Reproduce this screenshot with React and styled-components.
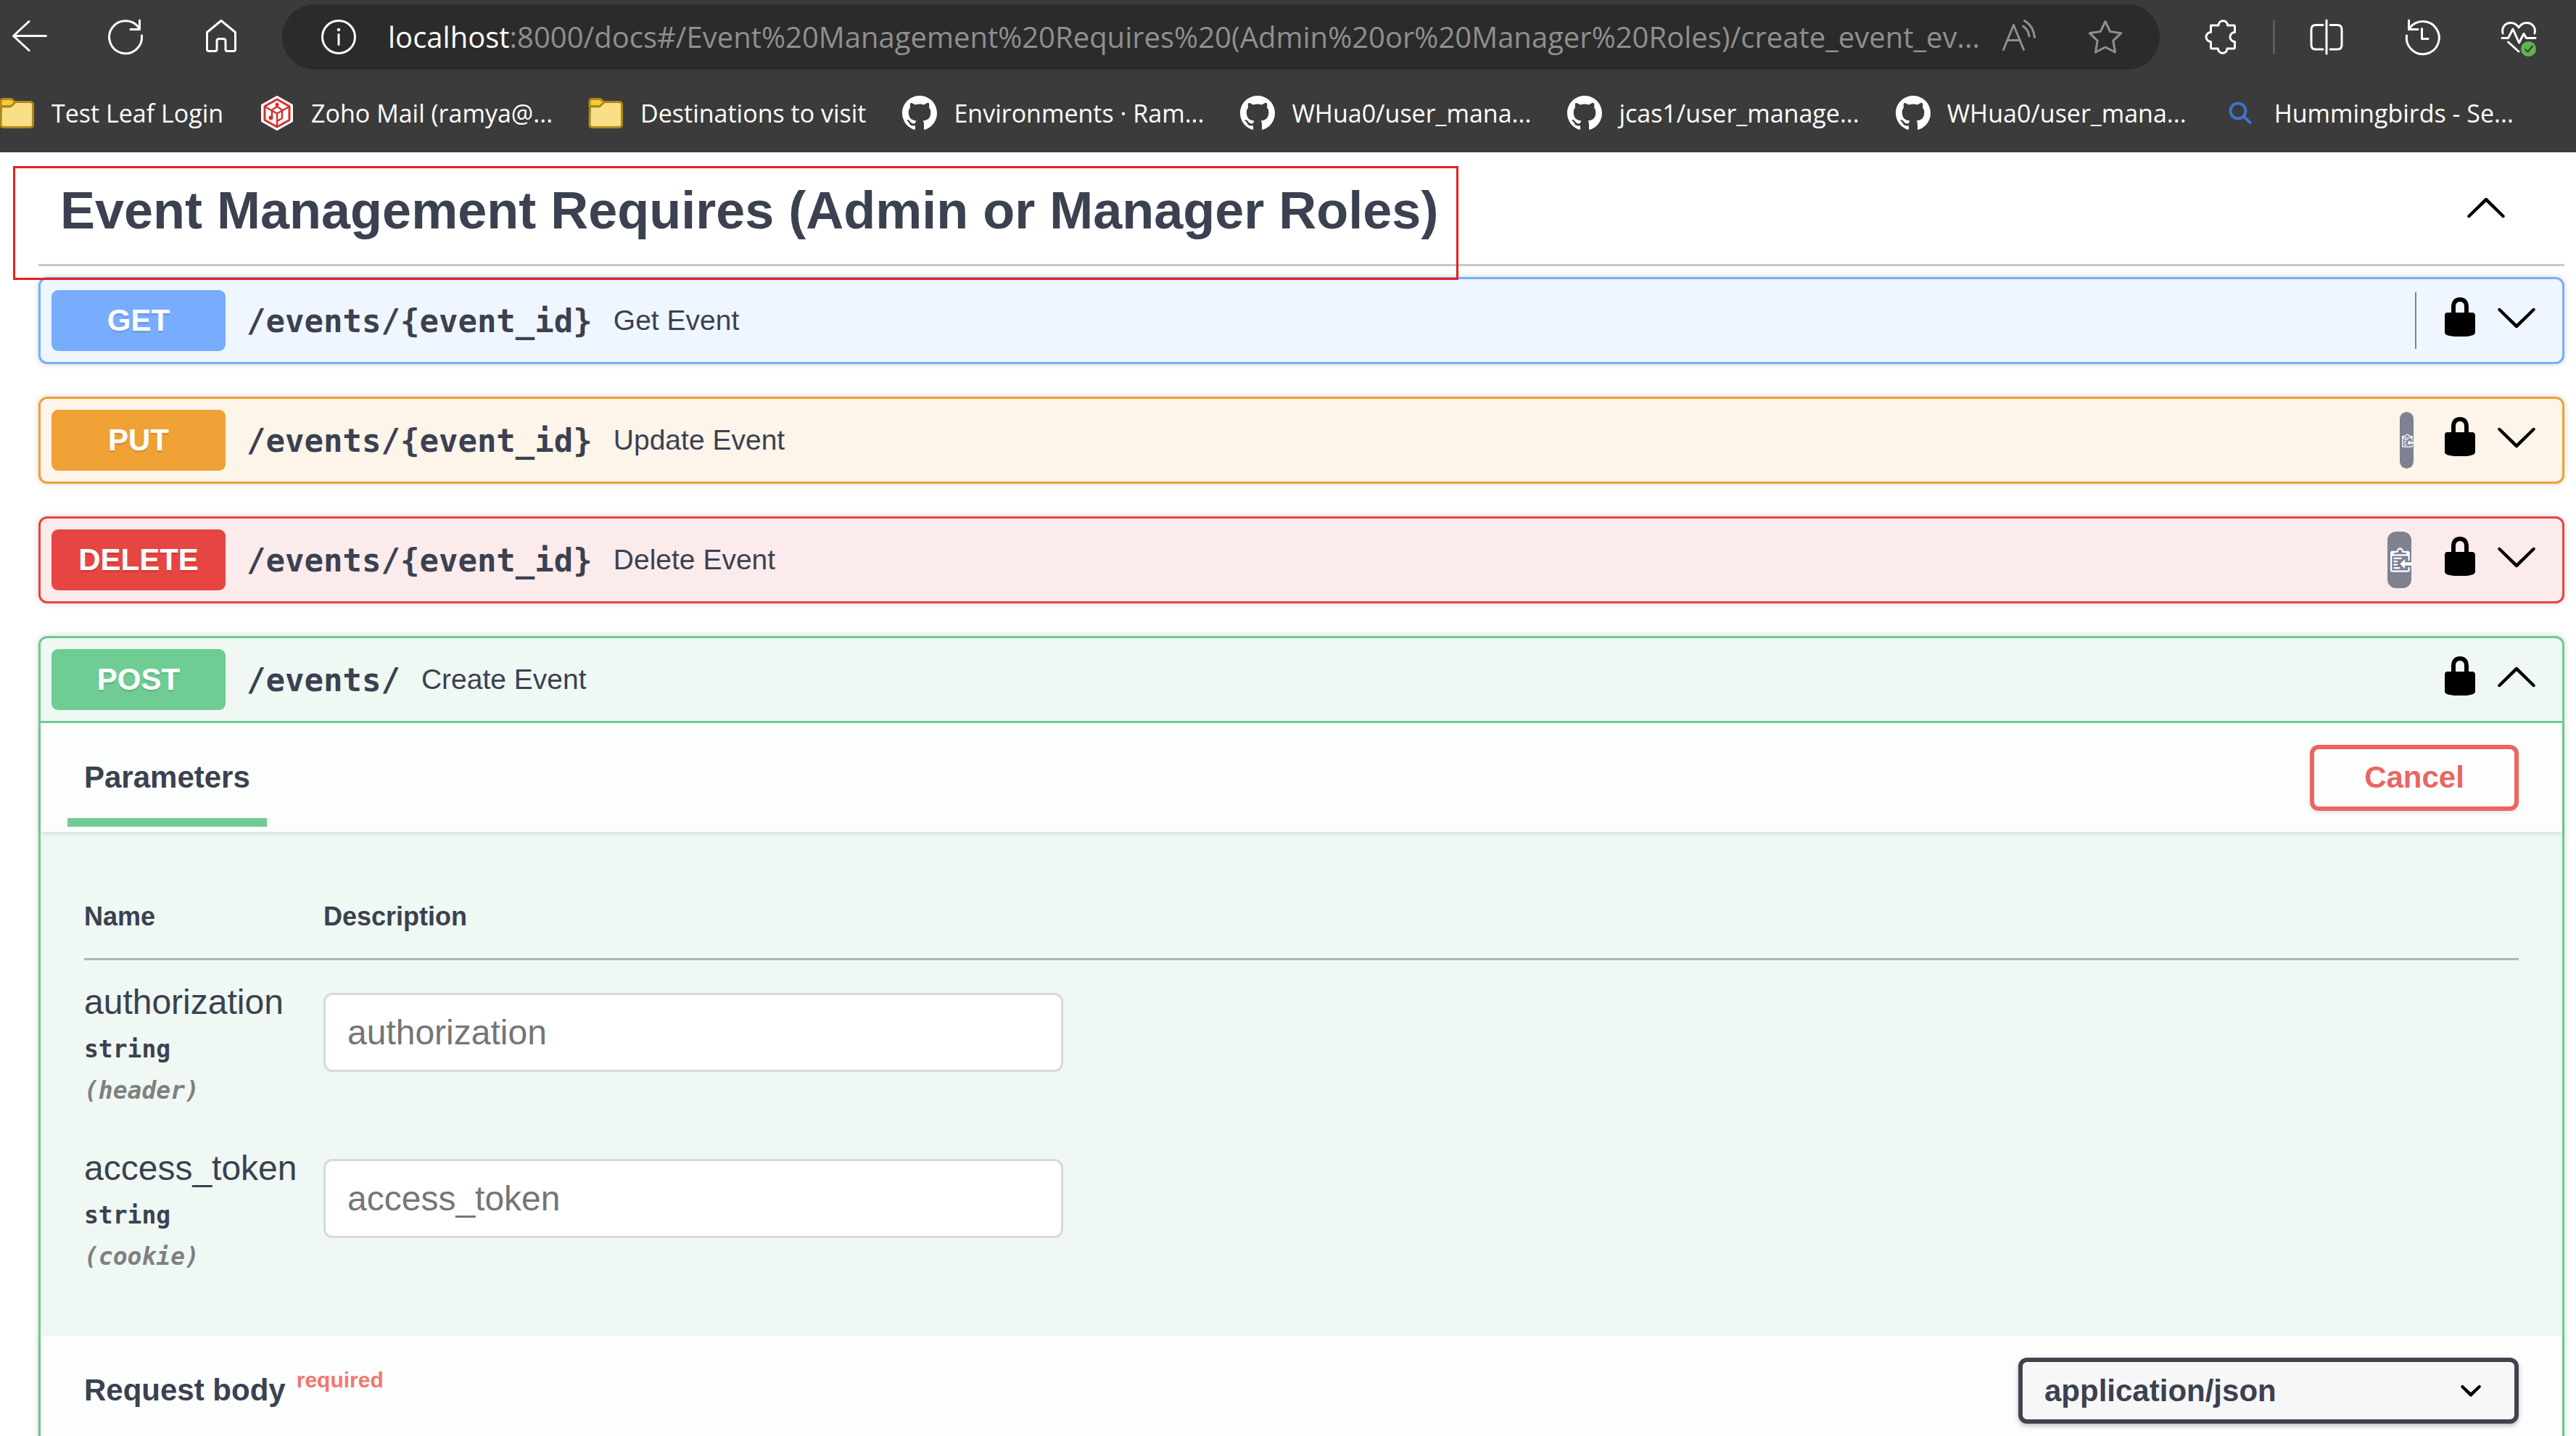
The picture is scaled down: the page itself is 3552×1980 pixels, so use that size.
import React from "react";
import styled, { createGlobalStyle } from "styled-components";

const SANS = `"Liberation Sans", Arial, sans-serif`;
const MONO = `"DejaVu Sans Mono", monospace`;
const CHROME = `"Open Sans", "Noto Sans", sans-serif`;
const INK = "#3b4151";

const GlobalStyle = createGlobalStyle`
  *, *::before, *::after { box-sizing: border-box; }
  body { margin: 0; background: #fff; font-family: ${SANS}; color: ${INK}; }
  button, input, select { font: inherit; color: inherit; margin: 0; }
  button { background: none; border: 0; padding: 0; cursor: pointer; }
  h2, h3 { margin: 0; }
  svg { display: block; flex: none; overflow: visible; }
`;

const Screen = styled.div`
  height: 100vh;
  overflow: hidden;
`;

/* ---------- browser chrome ---------- */

const Chrome = styled.header`
  background: #3b3b3b;
  color: #fff;
  font-family: ${CHROME};
`;

const Toolbar = styled.div`
  display: flex;
  align-items: center;
  height: 102px;
  padding: 0 55px 0 17px;
`;

const IconGroup = styled.div`
  display: flex;
  gap: 84px;
`;

const IconButton = styled.button`
  color: ${(p) => p.$color || "#fff"};
`;

const AddressBar = styled.div`
  flex: 1;
  min-width: 0;
  display: flex;
  align-items: center;
  height: 90px;
  margin: 0 60px;
  padding: 0 51px 0 54px;
  border-radius: 45px;
  background: #2b2b2b;
`;

const Url = styled.div`
  flex: 1;
  min-width: 0;
  margin-left: 44px;
  overflow: hidden;
  white-space: nowrap;
  font-size: 40px;
  line-height: 60px;
  color: #8f8f8f;
`;

const UrlHost = styled.span`
  color: #fff;
`;

const AddressActions = styled.div`
  display: flex;
  gap: 71px;
`;

const ToolbarDivider = styled.div`
  width: 3px;
  height: 48px;
  margin: 0 48px;
  background: #5c5c5c;
`;

const Bookmarks = styled.nav`
  display: flex;
  align-items: center;
  gap: 50px;
  height: 108px;
  overflow: hidden;
`;

const Bookmark = styled.a`
  display: flex;
  align-items: center;
  flex: none;
  gap: 23px;
  color: #fff;
  font-size: 34px;
  line-height: 48px;
  text-decoration: none;
  white-space: nowrap;
`;

const line = {
  fill: "none",
  stroke: "currentColor",
  strokeWidth: 3,
  strokeLinecap: "round",
  strokeLinejoin: "round",
};

const Icon48 = ({ children }) => (
  <svg width="48" height="48" viewBox="0 0 48 48" aria-hidden="true" {...line}>
    {children}
  </svg>
);

const BackIcon = () => (
  <Icon48><path d="M46.5 22.5H1.5M23 2.5L1.5 22.5L23 42.5" /></Icon48>
);
const ReloadIcon = () => (
  <Icon48><path d="M46.5 22A22.5 22.5 0 1 1 42.5 11.2M43.5 1V13.5H31" /></Icon48>
);
const HomeIcon = () => (
  <Icon48>
    <path d="M24 1.5L43.5 17.5V41q0 2.5-2.5 2.5H32.5q-2.5 0-2.5-2.5V29.5q0-3-3-3h-6q-3 0-3 3V41q0 2.5-2.5 2.5H7q-2.5 0-2.5-2.5V17.5Z" />
  </Icon48>
);
const InfoIcon = () => (
  <Icon48>
    <circle cx="24" cy="24" r="22.5" />
    <circle cx="24" cy="14" r="2.3" fill="currentColor" stroke="none" />
    <path d="M24 20.5V34.5" />
  </Icon48>
);
const ReadAloudIcon = () => (
  <Icon48>
    <path d="M2.5 41.5L16.5 7.5L30.5 41.5M7.5 28.5H25.5M29.5 9Q37 14 38 23M31.5 1.5Q44 9 45.5 24.5" />
  </Icon48>
);
const StarIcon = () => (
  <Icon48>
    <path d="M24 2.5L30.6 16.5L45.7 18.7L34.9 29.2L37.5 45L24 38L10.5 45L13.1 29.2L2.3 18.7L17.4 16.5Z" />
  </Icon48>
);
const PuzzleIcon = () => (
  <Icon48>
    <path d="M10.5 8H21a6.3 6.3 0 0 1 12.6 0H42q1.5 0 1.5 1.5V17.5a6.5 6.5 0 0 0 0 13V38.5q0 1.5-1.5 1.5H33a6.3 6.3 0 0 1-12.6 0H12q-1.5 0-1.5-1.5V30.5a6.5 6.5 0 0 1 0-13Z" />
  </Icon48>
);
const SplitIcon = () => (
  <Icon48>
    <path d="M18 7.5H8q-6 0-6 6V35q0 6 6 6H18M28 7.5H38q6 0 6 6V35q0 6-6 6H28M23 1V47" />
  </Icon48>
);
const HistoryIcon = () => (
  <Icon48><path d="M1.5 22A22.5 22.5 0 1 0 5.5 12M4.5 1V13.5H17M22.5 12.5V26.5H31" /></Icon48>
);
const HealthIcon = () => (
  <Icon48>
    <path d="M2 19C0 10 6 4.5 13 4.5C18 4.5 21.5 7 24 11C26.5 7 30 4.5 35 4.5C42 4.5 48 10 46 19M1 25.5H9.5L16 13L24.5 32L31 19.5L34.5 25.5H47M9.5 31L24 44" />
    <circle cx="37.5" cy="40.5" r="10.5" fill="#62b152" stroke="none" />
    <path d="M33 41L36.5 44.5L43 36.5" stroke="#33402f" strokeWidth="2" />
  </Icon48>
);
const FolderIcon = () => (
  <svg width="48" height="48" viewBox="0 0 48 48" aria-hidden="true" stroke="#b0861a" strokeWidth="3" strokeLinejoin="round">
    <path d="M1.5 15H14L21 8.5H41.5q4 0 4 4V39.5q0 4-4 4H5q-4 0-4-4Z" fill="#f9df86" />
    <path d="M1 14.5V8q0-3.5 3.5-3.5H16L21 9L15 14.5Z" fill="#f1cd3e" />
  </svg>
);
const CubeIcon = () => (
  <svg width="48" height="48" viewBox="0 0 48 48" aria-hidden="true" fill="none" stroke="#d4302e" strokeWidth="3" strokeLinejoin="round">
    <path d="M24 1.5L44.5 13V35L24 46.5L3.5 35V13Z" fill="#fff" stroke="#fff" />
    <path d="M24 5L41 14.5V33.5L24 43L7 33.5V14.5Z" />
    <path d="M8 15.5L24 24.5L40 15.5M24 24.5V41M24 9.5V15L17 19.5M24 15L31 19.5M17 20V30M13.5 31L18 31M31 20V31L25 34.5" strokeWidth="2.5" />
    <circle cx="24" cy="12.5" r="2.5" fill="#d4302e" stroke="none" />
    <circle cx="15.5" cy="30.5" r="3" fill="#d4302e" stroke="none" />
  </svg>
);
const GithubIcon = () => (
  <svg width="48" height="48" viewBox="0 0 16 16" aria-hidden="true" fill="#fff">
    <path d="M8 0C3.58 0 0 3.58 0 8c0 3.54 2.29 6.53 5.47 7.59.4.07.55-.17.55-.38 0-.19-.01-.82-.01-1.49-2.01.37-2.53-.49-2.69-.94-.09-.23-.48-.94-.82-1.13-.28-.15-.68-.52-.01-.53.63-.01 1.08.58 1.23.82.72 1.21 1.87.87 2.33.66.07-.52.28-.87.51-1.07-1.78-.2-3.64-.89-3.64-3.95 0-.87.31-1.59.82-2.15-.08-.2-.36-1.02.08-2.12 0 0 .67-.21 2.2.82.64-.18 1.32-.27 2-.27.68 0 1.36.09 2 .27 1.53-1.04 2.2-.82 2.2-.82.44 1.1.16 1.92.08 2.12.51.56.82 1.27.82 2.15 0 3.07-1.87 3.75-3.65 3.95.29.25.54.73.54 1.48 0 1.07-.01 1.93-.01 2.2 0 .21.15.46.55.38A8.013 8.013 0 0016 8c0-4.42-3.58-8-8-8z" />
  </svg>
);
const SearchIcon = () => (
  <svg width="48" height="48" viewBox="0 0 48 48" aria-hidden="true" fill="none" stroke="#3a76c8" strokeWidth="4" strokeLinecap="round">
    <circle cx="21" cy="21" r="10.5" />
    <path d="M28.5 28.5L37.5 37" />
  </svg>
);

const BOOKMARKS = [
  { icon: FolderIcon, label: "Test Leaf Login" },
  { icon: CubeIcon, label: "Zoho Mail (ramya@..." },
  { icon: FolderIcon, label: "Destinations to visit" },
  { icon: GithubIcon, label: "Environments · Ram..." },
  { icon: GithubIcon, label: "WHua0/user_mana..." },
  { icon: GithubIcon, label: "jcas1/user_manage..." },
  { icon: GithubIcon, label: "WHua0/user_mana..." },
  { icon: SearchIcon, label: "Hummingbirds - Se..." },
];

function BrowserChrome() {
  return (
    <Chrome>
      <Toolbar>
        <IconGroup>
          <IconButton aria-label="Back"><BackIcon /></IconButton>
          <IconButton aria-label="Refresh"><ReloadIcon /></IconButton>
          <IconButton aria-label="Home"><HomeIcon /></IconButton>
        </IconGroup>
        <AddressBar>
          <IconButton aria-label="View site information"><InfoIcon /></IconButton>
          <Url>
            <UrlHost>localhost</UrlHost>
            :8000/docs#/Event%20Management%20Requires%20(Admin%20or%20Manager%20Roles)/create_event_ev...
          </Url>
          <AddressActions>
            <IconButton aria-label="Read aloud" $color="#8f8f8f"><ReadAloudIcon /></IconButton>
            <IconButton aria-label="Add to favorites" $color="#8f8f8f"><StarIcon /></IconButton>
          </AddressActions>
        </AddressBar>
        <IconButton aria-label="Extensions"><PuzzleIcon /></IconButton>
        <ToolbarDivider />
        <IconGroup>
          <IconButton aria-label="Split screen"><SplitIcon /></IconButton>
          <IconButton aria-label="History"><HistoryIcon /></IconButton>
          <IconButton aria-label="Browser essentials"><HealthIcon /></IconButton>
        </IconGroup>
      </Toolbar>
      <Bookmarks>
        {BOOKMARKS.map(({ icon: BookmarkIcon, label }, i) => (
          <Bookmark key={i} href="#">
            <BookmarkIcon />
            {label}
          </Bookmark>
        ))}
      </Bookmarks>
    </Chrome>
  );
}

/* ---------- API docs ---------- */

const Docs = styled.main`
  position: relative;
  padding: 0 16px 0 53px;
`;

const Annotation = styled.div`
  position: absolute;
  top: 19px;
  left: 18px;
  width: 1993px;
  height: 157px;
  border: 3px solid #eb1f1f;
  pointer-events: none;
`;

const TagHeader = styled.div`
  display: flex;
  align-items: center;
  justify-content: space-between;
  padding: 38px 78px 32px 30px;
  border-bottom: 3px solid #c5c6cb;
`;

const TagTitle = styled.h2`
  font-size: 72px;
  line-height: 84px;
  font-weight: 700;
  white-space: nowrap;
`;

const ToggleButton = styled.button`
  color: #000;
`;

const Operations = styled.div`
  display: grid;
  gap: 45px;
  padding-top: 15px;
`;

const METHOD = {
  GET: { color: "#78adfe", tint: "#f0f6ff" },
  PUT: { color: "#efa136", tint: "#fdf4ea" },
  DELETE: { color: "#e74541", tint: "#fcebeb" },
  POST: { color: "#6fcc93", tint: "#eff8f3" },
};

const Block = styled.section`
  border: 3px solid ${(p) => METHOD[p.$method].color};
  border-radius: 12px;
  background: ${(p) => METHOD[p.$method].tint};
  box-shadow: 0 0 9px rgba(0, 0, 0, 0.19);
`;

const Summary = styled.div`
  display: flex;
  align-items: center;
  padding: 15px 33px 15px 15px;
`;

const SummaryControl = styled.button`
  flex: 1;
  display: flex;
  align-items: center;
  gap: 29px;
  text-align: left;
`;

const MethodBadge = styled.span`
  width: 240px;
  padding: 18px 0;
  border-radius: 9px;
  background: ${(p) => METHOD[p.$method].color};
  color: #fff;
  font-size: 42px;
  line-height: 48px;
  font-weight: 700;
  text-align: center;
  text-shadow: 0 3px 0 rgba(0, 0, 0, 0.1);
`;

const Path = styled.span`
  font-family: ${MONO};
  font-size: 44px;
  font-weight: 700;
`;

const SummaryText = styled.span`
  font-size: 39px;
`;

const CopyChip = styled.button`
  display: flex;
  align-items: center;
  justify-content: flex-end;
  width: ${(p) => p.$width}px;
  height: 78px;
  margin-right: ${(p) => p.$gap}px;
  border-radius: ${(p) => (p.$width < 3 ? 0 : 12)}px;
  background: #7d8293;
  overflow: hidden;
`;

const HeaderActions = styled.div`
  display: flex;
  gap: 18px;
  padding-bottom: 10px;
`;

const Glyph = ({ d }) => (
  <svg width="60" height="60" viewBox="0 0 20 20" aria-hidden="true" fill="#000">
    <path d={d} />
  </svg>
);

const ARROW_UP =
  "M17.418 14.908C17.69 15.176 18.127 15.176 18.397 14.908C18.667 14.64 18.668 14.207 18.397 13.939L10.489 6.109C10.219 5.841 9.782 5.841 9.51 6.109L1.602 13.939C1.332 14.207 1.332 14.64 1.602 14.908C1.873 15.176 2.311 15.176 2.581 14.908L10 7.767L17.418 14.908Z";
const ARROW_DOWN =
  "M17.418 6.109c.272-.268.709-.268.979 0s.271.701 0 .969l-7.908 7.83c-.27.268-.707.268-.979 0l-7.908-7.83c-.27-.268-.27-.701 0-.969.271-.268.709-.268.979 0L10 13.25l7.418-7.141z";
const SELECT_ARROW =
  "M13.418 7.859a.695.695 0 01.978 0 .68.68 0 010 .969l-3.908 3.83a.697.697 0 01-.979 0l-3.908-3.83a.68.68 0 010-.969.695.695 0 01.978 0L10 11l3.418-3.141z";
const LOCK =
  "M15.8 8H14V5.6C14 2.703 12.665 1 10 1 7.334 1 6 2.703 6 5.6V8H4c-.553 0-1 .646-1 1.199V17c0 .549.428 1.139.951 1.307l1.197.387C5.672 18.861 6.55 19 7.1 19h5.8c.549 0 1.428-.139 1.951-.307l1.196-.387c.524-.167.953-.757.953-1.306V9.199C17 8.646 16.352 8 15.8 8zM12 8H8V5.199C8 3.754 8.797 3 10 3c1.203 0 2 .754 2 2.199V8z";

const ClipboardGlyph = ({ height }) => (
  <svg width={Math.round((height * 13) / 15)} height={height} viewBox="0 1 13 15" aria-hidden="true" fill="#fff">
    <path
      fillRule="evenodd"
      d="M2 13h4v1H2v-1zm5-6H2v1h5V7zm2 3V8l-3 3 3 3v-2h5v-2H9zM4.5 9H2v1h2.5V9zM2 12h2.5v-1H2v1zm9 1h1v2c-.02.28-.11.52-.3.7-.19.18-.42.28-.7.3H1c-.55 0-1-.45-1-1V4c0-.55.45-1 1-1h3c0-1.11.89-2 2-2 1.11 0 2 .89 2 2h3c.55 0 1 .45 1 1v5h-1V6H1v9h10v-2zM2 5h8c0-.55-.45-1-1-1H8c-.55 0-1-.45-1-1s-.45-1-1-1-1 .45-1 1-.45 1-1 1H3c-.55 0-1 .45-1 1z"
    />
  </svg>
);

function Operation({ method, path, summary, copy, open, children }) {
  return (
    <Block $method={method}>
      <Summary>
        <SummaryControl aria-expanded={Boolean(open)}>
          <MethodBadge $method={method}>{method}</MethodBadge>
          <Path>{path}</Path>
          <SummaryText>{summary}</SummaryText>
        </SummaryControl>
        {copy && (
          <CopyChip $width={copy.width} $gap={copy.gap} aria-label="Copy to clipboard">
            {copy.icon && <ClipboardGlyph height={copy.icon} />}
          </CopyChip>
        )}
        <HeaderActions>
          <ToggleButton aria-label="Authorization"><Glyph d={LOCK} /></ToggleButton>
          <ToggleButton aria-label={open ? "Collapse operation" : "Expand operation"}>
            <Glyph d={open ? ARROW_UP : ARROW_DOWN} />
          </ToggleButton>
        </HeaderActions>
      </Summary>
      {children}
    </Block>
  );
}

const Body = styled.div`
  border-top: 3px solid ${METHOD.POST.color};
`;

const SectionHeader = styled.div`
  display: flex;
  align-items: center;
  justify-content: space-between;
  height: 150px;
  padding: 0 60px;
  background: #fcfefd;
  box-shadow: 0 3px 6px rgba(0, 0, 0, 0.1);
`;

const SectionTitle = styled.h3`
  display: flex;
  align-items: center;
  gap: 15px;
  font-size: 42px;
  line-height: 48px;
  font-weight: 700;
`;

const ActiveTab = styled(SectionTitle)`
  position: relative;
  height: 100%;

  &::after {
    content: "";
    position: absolute;
    left: -10%;
    right: -10%;
    bottom: 7px;
    height: 12px;
    background: ${METHOD.POST.color};
  }
`;

const Required = styled.sup`
  align-self: flex-start;
  font-size: 30px;
  line-height: 20px;
  color: #f37770;
`;

const CancelButton = styled.button`
  width: 288px;
  height: 91px;
  border: 6px solid #ec6561;
  border-radius: 12px;
  color: #ec6561;
  font-size: 42px;
  font-weight: 700;
  box-shadow: 0 3px 6px rgba(0, 0, 0, 0.1);
`;

const Parameters = styled.div`
  padding: 60px;
`;

const ParamTable = styled.table`
  width: 100%;
  border-collapse: separate;
  border-spacing: 0;
  table-layout: fixed;
`;

const HeadCell = styled.th`
  width: ${(p) => (p.$narrow ? "330px" : "auto")};
  padding: 36px 0;
  border-bottom: 3px solid #afb7b7;
  font-size: 36px;
  line-height: 42px;
  text-align: left;
`;

const NameCell = styled.td`
  padding: 31px 0 21px;
  vertical-align: top;
`;

const InputCell = styled.td`
  padding: 45px 0 0;
  vertical-align: top;
`;

const ParamName = styled.label`
  display: block;
  margin-bottom: 9px;
  font-size: 48px;
  line-height: 54px;
`;

const ParamMeta = styled.div`
  font-family: ${MONO};
  font-size: 33px;
  line-height: 57px;
  font-weight: 700;
  font-style: ${(p) => (p.$location ? "italic" : "normal")};
  color: ${(p) => (p.$location ? "#808080" : INK)};
`;

const ParamInput = styled.input`
  display: block;
  width: 1020px;
  max-width: 100%;
  height: 109px;
  padding: 0 30px;
  border: 3px solid #d9d9d9;
  border-radius: 12px;
  background: #fff;
  font-size: 48px;

  &::placeholder { color: #757575; opacity: 1; }
`;

const SelectBox = styled.div`
  display: grid;
  align-items: center;
  width: 690px;

  > * { grid-area: 1 / 1; }
  > svg { justify-self: end; margin-right: 36px; pointer-events: none; }
`;

const ContentType = styled.select`
  appearance: none;
  width: 100%;
  height: 91px;
  padding: 0 30px;
  border: 6px solid #41444e;
  border-radius: 12px;
  background: #f7f7f7;
  font-size: 42px;
  font-weight: 700;
  box-shadow: 0 3px 6px rgba(0, 0, 0, 0.25);
`;

const PARAMS = [
  { name: "authorization", type: "string", location: "(header)" },
  { name: "access_token", type: "string", location: "(cookie)" },
];

export default function App() {
  return (
    <Screen>
      <GlobalStyle />
      <BrowserChrome />
      <Docs>
        <TagHeader>
          <TagTitle>Event Management Requires (Admin or Manager Roles)</TagTitle>
          <HeaderActions>
            <ToggleButton aria-label="Collapse section"><Glyph d={ARROW_UP} /></ToggleButton>
          </HeaderActions>
        </TagHeader>
        <Operations>
          <Operation method="GET" path="/events/{event_id}" summary="Get Event" copy={{ width: 2, gap: 30 }} />
          <Operation method="PUT" path="/events/{event_id}" summary="Update Event" copy={{ width: 19, gap: 34, icon: 19 }} />
          <Operation method="DELETE" path="/events/{event_id}" summary="Delete Event" copy={{ width: 33, gap: 37, icon: 34 }} />
          <Operation method="POST" path="/events/" summary="Create Event" open>
            <Body>
              <SectionHeader>
                <ActiveTab>Parameters</ActiveTab>
                <CancelButton>Cancel</CancelButton>
              </SectionHeader>
              <Parameters>
                <ParamTable>
                  <thead>
                    <tr>
                      <HeadCell $narrow>Name</HeadCell>
                      <HeadCell>Description</HeadCell>
                    </tr>
                  </thead>
                  <tbody>
                    {PARAMS.map((p) => (
                      <tr key={p.name}>
                        <NameCell>
                          <ParamName htmlFor={p.name}>{p.name}</ParamName>
                          <ParamMeta>{p.type}</ParamMeta>
                          <ParamMeta $location>{p.location}</ParamMeta>
                        </NameCell>
                        <InputCell>
                          <ParamInput id={p.name} type="text" placeholder={p.name} />
                        </InputCell>
                      </tr>
                    ))}
                  </tbody>
                </ParamTable>
              </Parameters>
              <SectionHeader>
                <SectionTitle>
                  Request body
                  <Required>required</Required>
                </SectionTitle>
                <SelectBox>
                  <ContentType aria-label="Request content type" defaultValue="application/json">
                    <option>application/json</option>
                  </ContentType>
                  <Glyph d={SELECT_ARROW} />
                </SelectBox>
              </SectionHeader>
            </Body>
          </Operation>
        </Operations>
        <Annotation />
      </Docs>
    </Screen>
  );
}
